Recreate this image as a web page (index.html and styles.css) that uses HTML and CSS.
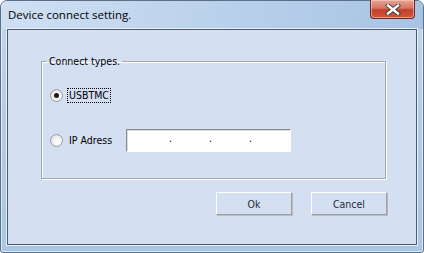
FILE: index.html
```html
<!DOCTYPE html>
<html lang="en">
<head>
    <meta charset="UTF-8">
    <title>Device connect setting.</title>
    <link rel="stylesheet" href="styles.css">
</head>
<body>
    <div class="window">
        <div class="titlebar">
            <span class="title">Device connect setting.</span>
            <button class="close" type="button" aria-label="Close">
                <svg width="16" height="11" viewBox="0 0 16 11">
                    <path d="M3 1.5 L13 9.5 M13 1.5 L3 9.5" stroke="#3a3a3a" stroke-width="4.2" stroke-linecap="square"/>
                    <path d="M3 1.5 L13 9.5 M13 1.5 L3 9.5" stroke="#ffffff" stroke-width="2.4" stroke-linecap="square"/>
                </svg>
            </button>
        </div>
        <div class="client">
            <fieldset class="group">
                <legend>Connect types.</legend>
                <div class="option">
                    <span class="radio checked"></span>
                    <span class="label focus">USBTMC</span>
                </div>
                <div class="option">
                    <span class="radio"></span>
                    <span class="label ip-label">IP Adress</span>
                    <div class="ipbox">
                        <span>.</span><span>.</span><span>.</span>
                    </div>
                </div>
            </fieldset>
            <div class="actions">
                <button type="button" class="btn">Ok</button>
                <button type="button" class="btn">Cancel</button>
            </div>
        </div>
    </div>
</body>
</html>
```

FILE: styles.css
```css
html, body {
    margin: 0;
    padding: 0;
}
body {
    width: 424px;
    height: 253px;
    overflow: hidden;
    background: #ffffff;
    font-family: Tahoma, "DejaVu Sans Condensed", "DejaVu Sans", sans-serif;
    font-size: 10.5px;
}
.window {
    box-sizing: border-box;
    width: 424px;
    height: 253px;
    display: flex;
    flex-direction: column;
    border: 1px solid #5b6f86;
    border-radius: 7px 7px 3px 3px;
    background: linear-gradient(180deg, #c3d8ef 0%, #b4cde9 40%, #a9c6e6 100%);
    box-shadow: inset 0 0 0 1px rgba(255,255,255,0.6);
}
.titlebar {
    height: 28px;
    display: flex;
    align-items: flex-start;
    justify-content: space-between;
    background: linear-gradient(100deg, #cfe0f3 0%, #bdd3ec 45%, #a7c3e4 100%);
    border-radius: 6px 6px 0 0;
}
.title {
    font-family: "Open Sans", "Noto Sans", sans-serif;
    font-size: 11.5px;
    color: #000000;
    margin: 6px 0 0 7px;
}
.close {
    width: 45px;
    height: 19px;
    margin: -1px 8px 0 0;
    padding: 0;
    display: flex;
    align-items: center;
    justify-content: center;
    border: 1px solid #6b2a22;
    border-top: none;
    border-radius: 0 0 4px 4px;
    background: linear-gradient(180deg, #e8a596 0%, #d5755f 45%, #c1402a 55%, #d0583c 100%);
    box-shadow: inset 0 0 0 1px rgba(255,220,210,0.5);
}
.client {
    flex: 1;
    margin: 0 6px 7px 6px;
    border: 1px solid #4c5a6b;
    background: #d5dff2;
    box-shadow: 0 0 0 1px #e9f0fa;
    padding: 25px 0 0 33px;
    display: flex;
    flex-direction: column;
}
.group {
    box-sizing: border-box;
    width: 345px;
    height: 124px;
    margin: 0;
    padding: 0 0 0 8px;
    border: 1px solid #a4a8ae;
    box-shadow: 1px 1px 0 #ffffff, inset 1px 1px 0 #ffffff;
}
.group legend {
    padding: 0 2px;
    margin-left: -3px;
    color: #000000;
}
.option {
    display: flex;
    align-items: center;
    height: 21px;
}
.option:first-of-type {
    margin-top: 18px;
}
.option + .option {
    margin-top: 24px;
}
.radio {
    box-sizing: border-box;
    width: 13px;
    height: 13px;
    border-radius: 50%;
    border: 1px solid #979ea6;
    background: radial-gradient(circle at 60% 60%, #ffffff 0%, #f2f2f2 45%, #c9ced3 100%);
    display: flex;
    align-items: center;
    justify-content: center;
}
.radio.checked::after {
    content: "";
    width: 5px;
    height: 5px;
    border-radius: 50%;
    background: #1a1a1a;
}
.label {
    margin-left: 4px;
    color: #000000;
    padding: 0 1px;
    line-height: 13px;
    border: 1px solid transparent;
}
.label.focus {
    border: 1px dotted #000000;
}
.ip-label {
    width: 52px;
}
.ipbox {
    box-sizing: border-box;
    width: 165px;
    height: 23px;
    margin-left: 3px;
    display: flex;
    justify-content: center;
    gap: 37px;
    padding-left: 4px;
    padding-top: 2px;
    background: #ffffff;
    border: 1px solid #ffffff;
    border-top-color: #8a8a8a;
    border-left-color: #8a8a8a;
    box-shadow: inset 1px 1px 0 #dcdcdc;
    color: #000000;
}
.actions {
    display: flex;
    gap: 19px;
    margin-top: 13px;
    padding-left: 175px;
}
.btn {
    box-sizing: border-box;
    width: 76px;
    height: 23px;
    padding: 0;
    background: #d5dff2;
    font-family: Tahoma, "DejaVu Sans Condensed", "DejaVu Sans", sans-serif;
    font-size: 10.5px;
    color: #1e2b3e;
    border: 1px solid #a0a0a0;
    border-top-color: #ffffff;
    border-left-color: #ffffff;
    box-shadow: 1px 1px 0 #b8bcc2;
}
```
